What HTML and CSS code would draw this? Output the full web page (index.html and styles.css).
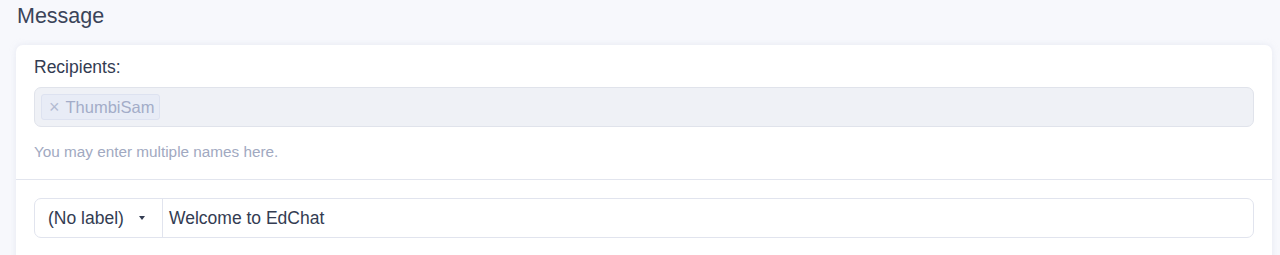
FILE: index.html
```html
<!DOCTYPE html>
<html>
<head>
<meta charset="utf-8">
<link rel="stylesheet" href="styles.css">
</head>
<body>
<div class="page">
  <h2 class="title">Message</h2>
  <div class="card">
    <div class="section">
      <label class="label">Recipients:</label>
      <div class="tagbox">
        <span class="tag"><span class="x">×</span>ThumbiSam</span>
      </div>
      <div class="help">You may enter multiple names here.</div>
    </div>
    <div class="section section2">
      <div class="group">
        <div class="select">(No label)<span class="caret"></span></div>
        <div class="subject">Welcome to EdChat</div>
      </div>
    </div>
  </div>
</div>
</body>
</html>
```
FILE: styles.css
```css
html, body {
  margin: 0;
  padding: 0;
  background: #f7f8fc;
  font-family: "Liberation Sans", Arial, sans-serif;
  color: #333c52;
}
.page {
  padding: 0 8px 0 16px;
}
.title {
  margin: 0;
  padding-top: 3px;
  padding-left: 1px;
  height: 45px;
  box-sizing: border-box;
  font-size: 21.5px;
  font-weight: normal;
  color: #3a4459;
  line-height: 26px;
}
.card {
  background: #fff;
  border-radius: 7px 7px 0 0;
  box-shadow: 0 0 6px rgba(200, 205, 225, 0.35);
  height: 230px;
}
.section {
  padding: 12px 18px 0 18px;
  height: 135px;
  box-sizing: border-box;
  border-bottom: 1px solid #e2e5ee;
}
.label {
  display: block;
  font-size: 17.5px;
  line-height: 20px;
  color: #333c52;
  margin-bottom: 10px;
}
.tagbox {
  height: 40px;
  box-sizing: border-box;
  background: #eff1f6;
  border: 1px solid #e0e3eb;
  border-radius: 7px;
  padding: 0 6px;
  display: flex;
  align-items: center;
}
.tag {
  display: inline-flex;
  align-items: center;
  height: 26px;
  box-sizing: border-box;
  padding: 0 5px 0 7px;
  background: #e8ecf6;
  border: 1px solid #dde2f0;
  border-radius: 3px;
  font-size: 16.5px;
  color: #a3acc8;
}
.x {
  font-size: 18px;
  margin-right: 6px;
  color: #b3bbd2;
}
.help {
  margin-top: 16px;
  font-size: 15.3px;
  line-height: 18px;
  color: #a1a9c1;
}
.section2 {
  border-bottom: none;
  padding-top: 18px;
}
.group {
  display: flex;
  height: 40px;
  box-sizing: border-box;
  border: 1px solid #e1e4ee;
  border-radius: 7px;
}
.select {
  width: 128px;
  box-sizing: border-box;
  padding-left: 13px;
  display: flex;
  align-items: center;
  font-size: 17.5px;
  color: #333c52;
  border-right: 1px solid #e1e4ee;
}
.caret {
  display: inline-block;
  width: 0;
  height: 0;
  border-left: 3.5px solid transparent;
  border-right: 3.5px solid transparent;
  border-top: 4px solid #333c52;
  margin-left: 15px;
}
.subject {
  flex: 1;
  display: flex;
  align-items: center;
  padding-left: 6px;
  font-size: 17.5px;
  color: #333c52;
}
```
